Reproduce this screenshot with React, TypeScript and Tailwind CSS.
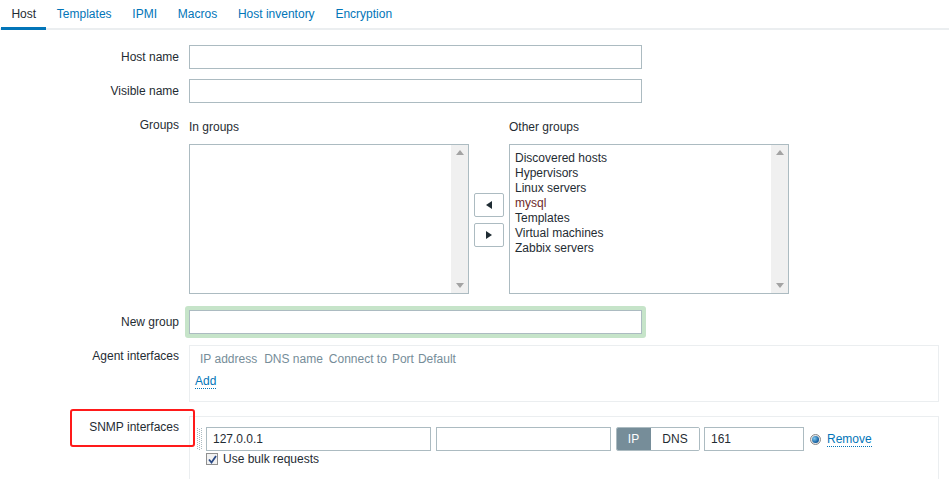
import React from "react";

const font = { fontFamily: '"Liberation Sans", Arial, sans-serif' };

function ScrollBar() {
  return (
    <div className="w-[17px] h-full bg-[#f0f0f0] flex flex-col justify-between items-center py-[5px]">
      <svg width="8" height="5" viewBox="0 0 8 5"><path d="M4 0L8 5H0z" fill="#a3a3a3" /></svg>
      <svg width="8" height="5" viewBox="0 0 8 5"><path d="M0 0H8L4 5z" fill="#a3a3a3" /></svg>
    </div>
  );
}

function ListBox({ items }: { items?: string[] }) {
  return (
    <div className="w-[280px] h-[150px] border border-[#acbbc1] bg-white flex">
      <div className="flex-1 pl-[5px] pt-[6px] leading-[15px] text-[12px] text-[#1f2c33]">
        {items?.map((it) => (
          <div key={it} className={it === "mysql" ? "text-[#6e2a2a]" : ""}>{it}</div>
        ))}
      </div>
      <ScrollBar />
    </div>
  );
}

function Label({ children, pt = "" }: { children: React.ReactNode; pt?: string }) {
  return (
    <div className={`w-[179px] shrink-0 text-right text-[12px] leading-[14px] text-[#1f2c33] ${pt}`}>{children}</div>
  );
}

export default function App() {
  const tabs = ["Host", "Templates", "IPMI", "Macros", "Host inventory", "Encryption"];
  return (
    <div style={font} className="w-[949px] h-[479px] bg-white overflow-hidden text-[12px] text-[#1f2c33]">
      {/* Tabs */}
      <div className="flex h-[30px] pl-[1px] shadow-[inset_0_-2px_0_#ebeef0]">
        {tabs.map((t, i) => (
          <div
            key={t}
            className={`h-[30px] px-[10.4px] flex items-center pb-[3px] ${
              i === 0 ? "text-[#1f2c33] shadow-[inset_0_-3px_0_#0275b8]" : "text-[#0275b8]"
            }`}
          >
            {t}
          </div>
        ))}
      </div>

      {/* Form */}
      <div className="pt-[15px]">
        {/* Host name */}
        <div className="flex items-center h-[24px]">
          <Label>Host name</Label>
          <input className="ml-[10px] w-[453px] h-[24px] border border-[#acbbc1] outline-none" />
        </div>
        {/* Visible name */}
        <div className="flex items-center h-[24px] mt-[10px]">
          <Label>Visible name</Label>
          <input className="ml-[10px] w-[453px] h-[24px] border border-[#acbbc1] outline-none" />
        </div>
        {/* Groups */}
        <div className="flex mt-[10px]">
          <Label pt="pt-[5px]">Groups</Label>
          <div className="ml-[10px] flex">
            <div>
              <div className="pt-[7px] leading-[14px]">In groups</div>
              <div className="mt-[10px]"><ListBox /></div>
            </div>
            <div className="self-end h-[150px] flex flex-col justify-center gap-[6px] mx-[5px] pt-[2px]">
              <button className="w-[30px] h-[24px] border border-[#acbbc1] rounded-[2px] bg-white flex items-center justify-center">
                <svg width="6" height="8" viewBox="0 0 6 8"><path d="M6 0V8L0 4z" fill="#1f2c33" /></svg>
              </button>
              <button className="w-[30px] h-[24px] border border-[#acbbc1] rounded-[2px] bg-white flex items-center justify-center">
                <svg width="6" height="8" viewBox="0 0 6 8"><path d="M0 0V8L6 4z" fill="#1f2c33" /></svg>
              </button>
            </div>
            <div>
              <div className="pt-[7px] leading-[14px]">Other groups</div>
              <div className="mt-[10px]">
                <ListBox items={["Discovered hosts", "Hypervisors", "Linux servers", "mysql", "Templates", "Virtual machines", "Zabbix servers"]} />
              </div>
            </div>
          </div>
        </div>
        {/* New group */}
        <div className="flex items-center h-[24px] mt-[16px]">
          <Label>New group</Label>
          <div className="ml-[6px] p-[4px] rounded-[3px] bg-[#c6e4c9]">
            <input className="block w-[453px] h-[24px] border border-[#acbbc1] bg-white outline-none" />
          </div>
        </div>
        {/* Agent interfaces */}
        <div className="flex mt-[11px]">
          <Label pt="pt-[4px]">Agent interfaces</Label>
          <div className="ml-[10px] w-[750px] h-[57px] border border-[#ebeef0]">
            <div className="flex pt-[6px] pl-[10px] leading-[14px] text-[#768d99]">
              <span>IP address</span>
              <span className="ml-[7px]">DNS name</span>
              <span className="ml-[6px]">Connect to</span>
              <span className="ml-[5px]">Port</span>
              <span className="ml-[4px]">Default</span>
            </div>
            <div className="pl-[5px] mt-[8px] leading-[14px]">
              <span className="text-[#0275b8] border-b border-dotted border-[#0275b8]">Add</span>
            </div>
          </div>
        </div>
        {/* SNMP interfaces */}
        <div className="flex mt-[14px] relative">
          <Label pt="pt-[4px]">SNMP interfaces</Label>
          <div className="absolute left-[70px] top-[-7px] w-[125px] h-[38px] border-2 border-[#ff1a1a] rounded-[3px] z-10 pointer-events-none" />
          <div className="ml-[10px] w-[750px] h-[70px] border border-[#ebeef0] pt-[10px] pl-[7px]">
            <div className="flex items-center h-[24px]">
              <svg width="6" height="22" viewBox="0 0 6 22" className="mr-[3px]">
                {Array.from({ length: 11 }).map((_, r) => (
                  <g key={r}>
                    <rect x="0" y={r * 2} width="1" height="1" fill="#acbbc1" />
                    <rect x="4" y={r * 2} width="1" height="1" fill="#acbbc1" />
                    <rect x="2" y={r * 2 + 1} width="1" height="1" fill="#acbbc1" />
                  </g>
                ))}
              </svg>
              <input defaultValue="127.0.0.1" className="w-[225px] h-[24px] border border-[#acbbc1] pl-[6px] outline-none text-[12px] text-[#1f2c33]" />
              <input className="ml-[5px] w-[175px] h-[24px] border border-[#acbbc1] outline-none" />
              <div className="ml-[5px] flex h-[24px] rounded-[2px] border border-[#acbbc1] overflow-hidden">
                <div className="w-[35px] -ml-px -my-px h-[24px] bg-[#768d99] text-white flex items-center justify-center rounded-l-[2px]">IP</div>
                <div className="w-[48px] flex items-center justify-center bg-white">DNS</div>
              </div>
              <input defaultValue="161" className="ml-[4px] w-[100px] h-[24px] border border-[#acbbc1] pl-[6px] outline-none text-[12px] text-[#1f2c33]" />
              <div className="ml-[6px] w-[11px] h-[11px] rounded-full border border-[#8a8a8a] bg-[#e6e6e6] flex items-center justify-center">
                <div className="w-[7px] h-[7px] rounded-full bg-[radial-gradient(circle_at_35%_35%,#7fc8f0,#0f5a9c_70%)]" />
              </div>
              <span className="ml-[6px] leading-[14px] text-[#0275b8] border-b border-dotted border-[#0275b8]">Remove</span>
            </div>
            <div className="flex items-center mt-[1px] ml-[9px] h-[14px]">
              <div className="w-[12px] h-[12px] border border-[#8f8f8f] bg-[#f2f2f2] flex items-center justify-center">
                <svg width="9" height="9" viewBox="0 0 9 9"><path d="M1 4.5L3.5 7.5L8 1" stroke="#2a4a86" strokeWidth="1.8" fill="none" /></svg>
              </div>
              <span className="ml-[5px] leading-[14px]">Use bulk requests</span>
            </div>
          </div>
        </div>
      </div>
    </div>
  );
}
